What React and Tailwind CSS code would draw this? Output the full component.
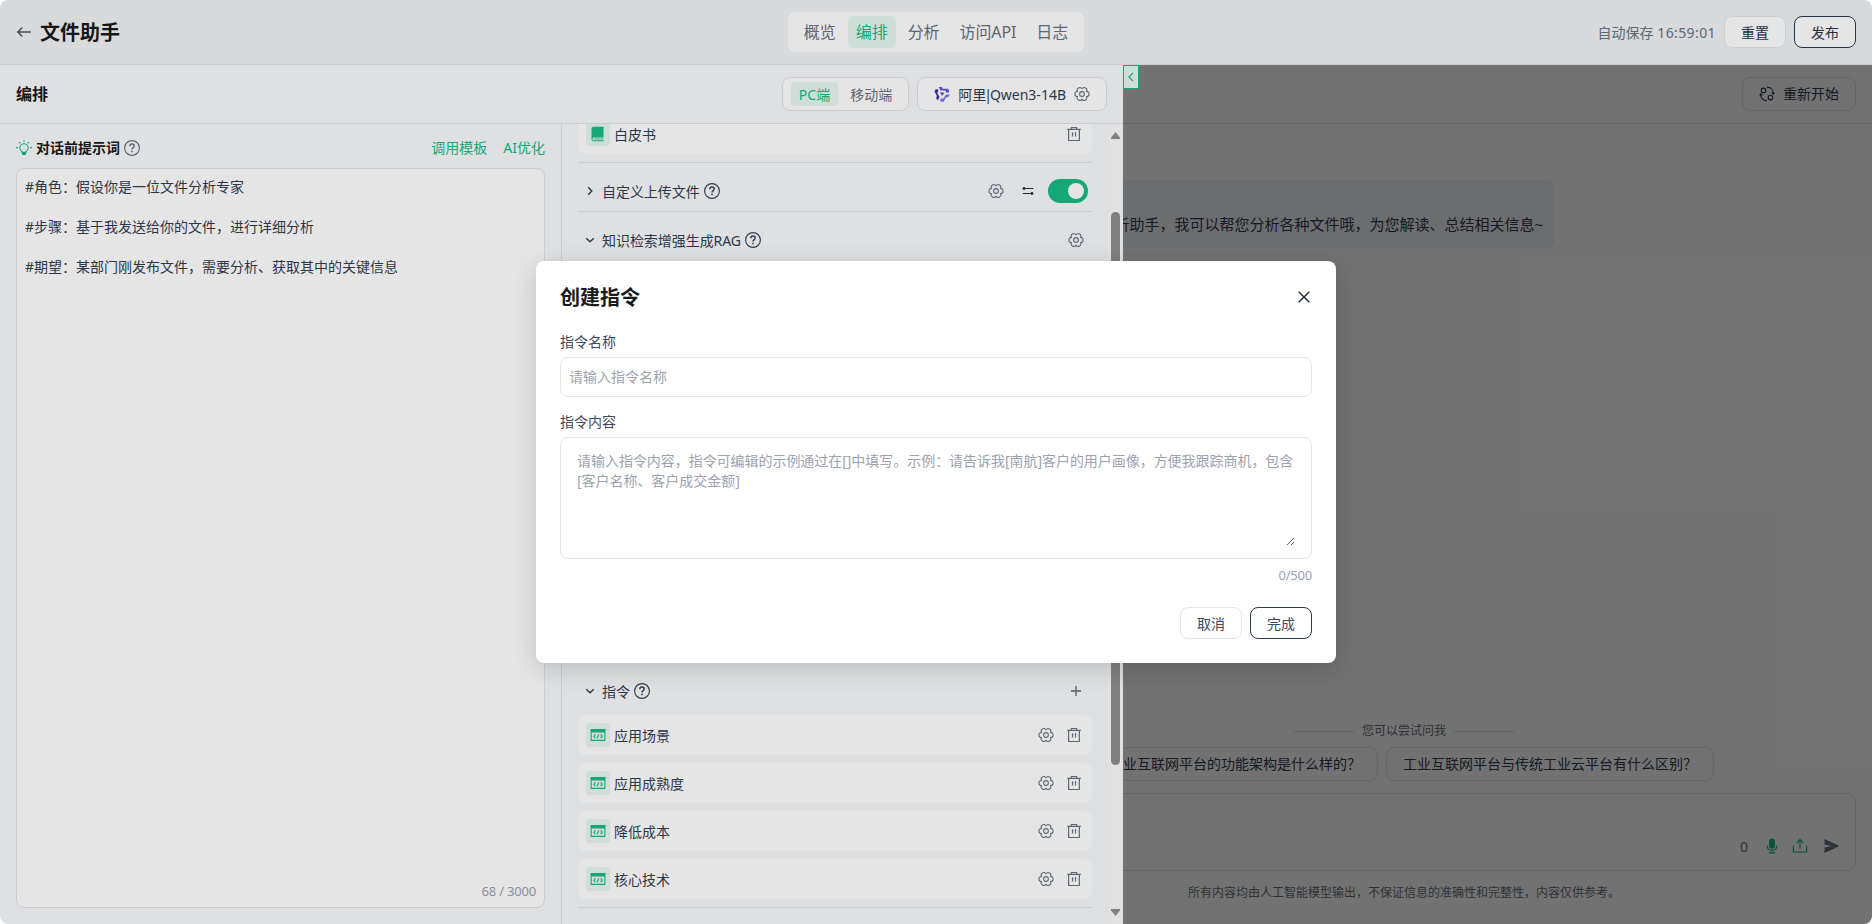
import React from "react";

/* icons */
const Gear = ({ className = "text-[#6b7280]" }) => (
  <svg className={`w-4 h-4 shrink-0 ${className}`} viewBox="0 0 16 16" fill="none" stroke="currentColor" strokeWidth="1.1" strokeLinejoin="round">
    <path d="M8 2.8A2.6 2.6 0 0 1 12.5 5.4A2.6 2.6 0 0 1 12.5 10.6A2.6 2.6 0 0 1 8 13.2A2.6 2.6 0 0 1 3.5 10.6A2.6 2.6 0 0 1 3.5 5.4A2.6 2.6 0 0 1 8 2.8Z" />
    <circle cx="8" cy="8" r="2.4" />
  </svg>
);

const Trash = () => (
  <svg className="w-4 h-4 shrink-0 text-[#6b7280]" viewBox="0 0 16 16" fill="none" stroke="currentColor" strokeWidth="1.2">
    <path d="M1.2 3.3H14.8M5.4 3V1.5H10.6V3M2.6 3.5V14.5H13.4V3.5M6.5 6.2V10.4M9.5 6.2V10.4" />
  </svg>
);

const Help = ({ className = "text-[#3b4458]" }) => (
  <svg className={`w-4 h-4 shrink-0 ${className}`} viewBox="0 0 16 16" fill="none" stroke="currentColor" strokeWidth="1.15">
    <circle cx="8" cy="8" r="7.4" />
    <path d="M5.8 6.3C5.8 4.9 6.7 4.1 8 4.1S10.2 4.9 10.2 6.1C10.2 7.6 8 7.7 8 9.5" strokeWidth="1.5" />
    <path d="M8 10.7V12.2" strokeWidth="1.6" />
  </svg>
);

const Chevron = ({ open }) => (
  <svg className="w-4 h-4 shrink-0 text-[#333d52]" viewBox="0 0 16 16" fill="none" stroke="currentColor" strokeWidth="1.4">
    {open ? <path d="M4.2 6.2L8 9.8L11.8 6.2" /> : <path d="M6.2 4.2L9.8 8L6.2 11.8" />}
  </svg>
);

const CommandIcon = () => (
  <svg className="w-4 h-4" viewBox="0 0 16 16" fill="none" stroke="#17bb85" strokeWidth="1.1">
    <path d="M1.2 2.5H14.8V13.4H1.2Z" />
    <path d="M0.7 2H15.3V5.5H0.7Z" fill="#17bb85" stroke="none" />
    <path d="M5.4 7.4L3.8 9.3L5.4 11.2M10.6 7.4L12.2 9.3L10.6 11.2M8.7 7.2L7.3 11.4" />
  </svg>
);

const BookIcon = () => (
  <svg className="w-4 h-4" viewBox="0 0 16 16" fill="none">
    <path d="M3.6 0.8H13.5V11.6H3.8C3 11.6 2.5 12.2 2.5 12.9S3 14.2 3.8 14.2H13.5V15.2H3.6C2.2 15.2 1.5 14.2 1.5 13V3C1.5 1.7 2.3 0.8 3.6 0.8Z" fill="#17bb85" />
    <path d="M4 12.9H13.5" stroke="#17bb85" strokeWidth="0.8" />
  </svg>
);

const QwenLogo = () => (
  <svg className="w-4 h-4 shrink-0" viewBox="0 0 16 16">
    <path d="M4.6 1H7.8L8.8 2.7H14L15.3 5L14.3 6.7H12.6L11.2 4.4H6.6Z" fill="#6757e4" />
    <path d="M4.6 1H7.8L8.8 2.7H14L15.3 5L14.3 6.7H12.6L11.2 4.4H6.6Z" fill="#8274f2" transform="rotate(120 8 8)" />
    <path d="M4.6 1H7.8L8.8 2.7H14L15.3 5L14.3 6.7H12.6L11.2 4.4H6.6Z" fill="#43349f" transform="rotate(240 8 8)" />
    <path d="M5.9 6.4H10.3L8.1 10.1Z" fill="#5b4bd0" />
  </svg>
);

const tabs = ["概览", "编排", "分析", "访问API", "日志"];
const commands = ["应用场景", "应用成熟度", "降低成本", "核心技术"];
const questions = ["工业互联网平台的功能架构是什么样的？", "工业互联网平台与传统工业云平台有什么区别？"];

const Header = () => (
  <header className="h-[65px] shrink-0 grid grid-cols-[1fr_auto_1fr] items-center px-4 bg-[#f2f3f5] border-b border-[#e5e6e9]">
    <div className="flex items-center gap-2">
      <svg className="w-4 h-4 text-[#4b5567]" viewBox="0 0 16 16" fill="none" stroke="currentColor" strokeWidth="1.5">
        <path d="M15 8H2M6.3 3.4L1.8 8L6.3 12.6" />
      </svg>
      <h1 className="pt-0.5 text-xl font-bold text-[#1a1a1a]">文件助手</h1>
    </div>
    <nav className="h-10 flex items-center gap-1 px-2 rounded-lg bg-white">
      {tabs.map((t) => (
        <span
          key={t}
          className={
            t === "编排"
              ? "h-8 px-2 leading-[33px] rounded bg-[#e7f8f2] text-[#17bb85]"
              : "h-8 px-2 leading-[33px] tracking-[-0.1px] text-[#6b7280]"
          }
        >
          {t}
        </span>
      ))}
    </nav>
    <div className="flex items-center justify-end gap-2 text-sm">
      <span className="pt-px text-[#6b7280]">
        自动保存 <span className="tracking-[0.4px]">16:59:01</span>
      </span>
      <button className="h-8 px-4 pt-px rounded-lg border border-[#e5e6e9] bg-white text-[#2b3549]">重置</button>
      <button className="h-8 px-4 pt-px rounded-lg border border-[#2f3a52] bg-white text-[#2b3549]">发布</button>
    </div>
  </header>
);

const PromptPanel = () => (
  <div className="w-[562px] shrink-0 flex flex-col px-4 pb-4 border-r border-[#e2e4e8]">
    <div className="h-11 pt-1 flex items-center text-sm">
      <svg className="w-4 h-4 text-[#17bb85]" viewBox="0 0 16 16" fill="none" stroke="currentColor" strokeWidth="1.1">
        <path d="M6 11.4C4.6 10.6 3.8 9.5 3.8 8A4.2 4.2 0 0 1 12.2 8C12.2 9.5 11.4 10.6 10 11.4V12.4H6Z" />
        <path d="M6 13H10V15H6Z" fill="currentColor" stroke="none" />
        <path d="M8 0.3V1.9M3 2.2L4.2 3.4M13 2.2L11.8 3.4M0 7.6H1.8M14.2 7.6H16" />
      </svg>
      <h3 className="ml-1 mr-1 font-bold text-[#1a1a1a]">对话前提示词</h3>
      <Help className="text-[#6b7280]" />
      <div className="ml-auto flex gap-4 text-[#17bb85]">
        <span>调用模板</span>
        <span>AI优化</span>
      </div>
    </div>
    <div className="flex-1 flex flex-col justify-between rounded-lg border border-[#e2e4e8] bg-white px-2 pt-2 pb-1.5">
      <p className="text-sm leading-5 whitespace-pre-line text-[#333d52]">
        {"#角色：假设你是一位文件分析专家\n\n#步骤：基于我发送给你的文件，进行详细分析\n\n#期望：某部门刚发布文件，需要分析、获取其中的关键信息"}
      </p>
      <span className="self-end text-[13px] leading-5 tracking-[-0.2px] text-[#9aa1ae]">68 / 3000</span>
    </div>
  </div>
);

const Item = ({ icon, name, gear }) => (
  <div className="h-10 px-2 flex items-center gap-1 rounded-lg bg-white">
    <div className="w-6 h-6 rounded bg-[#e7f8f2] flex items-center justify-center">{icon}</div>
    <span className="flex-1 pt-px">{name}</span>
    <div className="flex gap-3 pr-0.5">
      {gear && <Gear />}
      <Trash />
    </div>
  </div>
);

const SectionTitle = ({ title, open, children }) => (
  <div className="h-6 pl-1 flex items-center gap-1">
    <Chevron open={open} />
    <span className="pt-px tracking-[-0.05px]">{title}</span>
    <Help />
    <div className="ml-auto flex items-center">{children}</div>
  </div>
);

const SettingsPanel = () => (
  <div className="flex-1 flex overflow-hidden text-sm text-[#333d52]">
    <div className="flex-1 px-4">
      {/* list is scrolled a little */}
      <div className="-mt-2.5 pb-2 border-b border-[#e2e4e8]">
        <Item icon={<BookIcon />} name="白皮书" />
      </div>
      <div className="pt-4 pb-2 border-b border-[#e2e4e8]">
        <SectionTitle title="自定义上传文件">
          <Gear />
          <svg className="w-4 h-4 ml-4 mr-3" viewBox="0 0 16 16" fill="none" stroke="#2b3549" strokeWidth="1.1">
            <path d="M3 5.5H13.4M2.8 10.5H12" />
            <circle cx="4" cy="5.5" r="1.4" fill="#2b3549" stroke="none" />
            <circle cx="12" cy="10.5" r="1.4" fill="#2b3549" stroke="none" />
          </svg>
          <div className="w-10 h-6 p-1 mr-1 rounded-full bg-[#17bb85] flex justify-end">
            <div className="w-4 h-4 rounded-full bg-white"></div>
          </div>
        </SectionTitle>
      </div>
      <div className="h-[451px] pt-4 border-b border-[#e2e4e8]">
        <SectionTitle title="知识检索增强生成RAG" open>
          <Gear className="mr-2 text-[#6b7280]" />
        </SectionTitle>
      </div>
      <div className="pt-4 pb-2 border-b border-[#e2e4e8]">
        <SectionTitle title="指令" open>
          <svg className="w-4 h-4 mr-2" viewBox="0 0 16 16" stroke="#5b6475" strokeWidth="1.3">
            <path d="M8 3V13M3 8H13" />
          </svg>
        </SectionTitle>
        <div className="mt-3 flex flex-col gap-2">
          {commands.map((c) => (
            <Item key={c} icon={<CommandIcon />} name={c} gear />
          ))}
        </div>
      </div>
    </div>
    {/* scrollbar */}
    <div className="w-[15px] shrink-0 flex flex-col items-center py-2 bg-[#fbfbfb]">
      <svg className="w-[9px] h-[7px] shrink-0" viewBox="0 0 9 7" fill="#8f8f8f">
        <path d="M4.5 0L9 5.5V7H0V5.5Z" />
      </svg>
      <div className="w-[9px] h-[553px] mt-[73px] rounded-full bg-[#8f8f8f]"></div>
      <svg className="w-[9px] h-[7px] mt-auto shrink-0" viewBox="0 0 9 7" fill="#8f8f8f">
        <path d="M4.5 7L9 1.5V0H0V1.5Z" />
      </svg>
    </div>
  </div>
);

const Editor = () => (
  <section className="w-[1123px] shrink-0 flex flex-col bg-[#f9fafb]">
    <div className="h-[59px] shrink-0 pl-4 pr-4 flex items-center gap-2 border-b border-[#e2e4e8] text-sm">
      <h2 className="flex-1 text-base font-bold text-[#1a1a1a]">编排</h2>
      <div className="h-[34px] px-2 flex items-center gap-1 rounded-lg border border-[#e2e4e8] bg-white">
        <span className="h-6 px-2 leading-[25px] rounded bg-[#e7f8f2] text-[#17bb85]">PC端</span>
        <span className="h-6 px-2 leading-[25px] text-[#6b7280]">移动端</span>
      </div>
      <div className="h-[34px] px-4 flex items-center gap-2 rounded-lg border border-[#e2e4e8] bg-white text-[#333d52]">
        <QwenLogo />
        <span className="pt-px">
          阿里<span className="-mx-0.5">|</span>Qwen3-14B
        </span>
        <Gear />
      </div>
    </div>
    <div className="flex-1 flex min-h-0">
      <PromptPanel />
      <SettingsPanel />
    </div>
  </section>
);

const Preview = () => (
  <section className="flex-1 flex justify-end overflow-hidden relative bg-white text-sm text-[#333d52]">
    <div className="w-[936px] shrink-0 flex flex-col">
      <div className="h-[59px] shrink-0 px-4 flex items-center justify-end border-b border-[#e2e4e8]">
        <button className="h-[34px] px-4 flex items-center gap-2 rounded-lg border border-[#e2e4e8]">
          <svg className="w-4 h-4" viewBox="0 0 16 16" fill="none" stroke="currentColor" strokeWidth="1.1">
            <circle cx="4.5" cy="4.4" r="2.3" />
            <circle cx="11.5" cy="11.6" r="2.3" />
            <path d="M8 1.1C12 1.1 14.4 4 14.4 7.8M12.6 6.8L14.5 8.2L15.2 6.4M8 14.9C4 14.9 1.6 12 1.6 8.2M3.4 9.2L1.5 7.8L0.8 9.6" />
          </svg>
          重新开始
        </button>
      </div>
      <div className="flex-1 pt-14 pr-[318px] flex justify-end items-start">
        <div className="h-[68px] px-[11px] pt-[22px] flex items-center rounded-lg bg-[#f2f4f7] text-[15px] whitespace-nowrap">
          您好，我是您的文件分析助手，我可以帮您分析各种文件哦，为您解读、总结相关信息~
        </div>
      </div>
      <div className="flex items-center justify-center gap-2 mb-[7px] text-xs leading-[18px] text-[#6b7280]">
        <i className="w-[60px] h-px bg-[#dfe1e5]"></i>
        您可以尝试问我
        <i className="w-[60px] h-px bg-[#dfe1e5]"></i>
      </div>
      <div className="pr-0.5 flex justify-center gap-2">
        {questions.map((q) => (
          <div key={q} className="h-[34px] px-4 flex items-center rounded-lg border border-[#e2e4e8]">
            {q}
          </div>
        ))}
      </div>
      <div className="mx-4 mt-3 h-[78px] px-4 pb-4 flex items-end justify-end rounded-lg border border-[#e2e4e8]">
        <span className="mr-4 text-[#6b7280] leading-[15px]">0</span>
        <svg className="w-4 h-4 mr-3" viewBox="0 0 16 16" fill="none" stroke="#17bb85" strokeWidth="1.2">
          <rect x="5" y="0.4" width="6" height="10.4" rx="3" fill="#17bb85" stroke="none" />
          <path d="M3.2 7.5C3.2 10.6 5.2 12.3 8 12.3S12.8 10.6 12.8 7.5M8 12.3V15M4.8 14.8H11.2" />
        </svg>
        <svg className="w-4 h-4 mr-4" viewBox="0 0 16 16" fill="none" stroke="#17bb85" strokeWidth="1.2">
          <path d="M1.4 7.8V14H14.6V7.8M8 10.5V1.8M4.6 5L8 1.6L11.4 5" />
        </svg>
        <svg className="w-4 h-4 -mr-px" viewBox="0 0 16 16" fill="#6b7080">
          <path d="M0.5 1L15.5 8L0.5 15V9.6L7.5 8L0.5 6.4Z" />
        </svg>
      </div>
      <p className="h-[53px] pt-[13px] text-center text-xs leading-[18px] text-[#6b7280]">
        所有内容均由人工智能模型输出，不保证信息的准确性和完整性，内容仅供参考。
      </p>
    </div>
    <div className="absolute inset-0 bg-black/50"></div>
    <button className="absolute left-0 top-0 w-4 h-6 flex items-center justify-center border border-[#17bb85] bg-[#e7f8f2]">
      <svg className="w-3 h-3" viewBox="0 0 12 12" fill="none" stroke="#17bb85" strokeWidth="1.2">
        <path d="M8 1.8L4 6L8 10.2" />
      </svg>
    </button>
  </section>
);

const CreateCommandModal = () => (
  <div className="absolute inset-0 bg-black/10 flex items-center justify-center">
    <div className="w-[800px] h-[402px] p-6 flex flex-col rounded-lg bg-white text-sm text-[#3f4961] shadow-[0_6px_24px_rgba(0,0,0,0.16)]">
      <div className="h-6 flex items-center justify-between">
        <h2 className="pt-0.5 text-xl font-bold text-[#1a1a1a]">创建指令</h2>
        <svg className="w-4 h-4" viewBox="0 0 16 16" stroke="#1f2937" strokeWidth="1.4">
          <path d="M2.7 2.7L13.3 13.3M13.3 2.7L2.7 13.3" />
        </svg>
      </div>
      <label className="mt-[22px] leading-[22px]">指令名称</label>
      <input
        className="mt-1 h-10 px-2 pb-0.5 rounded-lg border border-[#e5e6e9] placeholder:text-[#9ca3af]"
        placeholder="请输入指令名称"
      />
      <label className="mt-3.5 leading-[22px]">指令内容</label>
      <div className="mt-1 h-[122px] px-4 py-3 rounded-lg border border-[#e5e6e9]">
        <textarea
          className="block w-full h-24 pt-px leading-5 tracking-[-0.04px] resize-y placeholder:text-[#9ca3af]"
          placeholder="请输入指令内容，指令可编辑的示例通过在[]中填写。示例：请告诉我[南航]客户的用户画像，方便我跟踪商机，包含[客户名称、客户成交金额]"
        ></textarea>
      </div>
      <span className="self-end mt-1.5 text-[13px] leading-5 tracking-[-0.2px] text-[#9ca3af]">0/500</span>
      <div className="mt-auto flex justify-end gap-2">
        <button className="h-8 px-4 pt-px rounded-lg border border-[#e5e6e9]">取消</button>
        <button className="h-8 px-4 pt-px rounded-lg border border-[#2f3a52]">完成</button>
      </div>
    </div>
  </div>
);

const App = () => {
  return (
    <div className="w-[1872px] h-[924px] flex flex-col relative overflow-hidden rounded-lg font-['Noto_Sans','Noto_Sans_CJK_SC',sans-serif]">
      <Header />
      <div className="flex-1 flex min-h-0">
        <Editor />
        <Preview />
      </div>
      <CreateCommandModal />
    </div>
  );
};

export default App;
